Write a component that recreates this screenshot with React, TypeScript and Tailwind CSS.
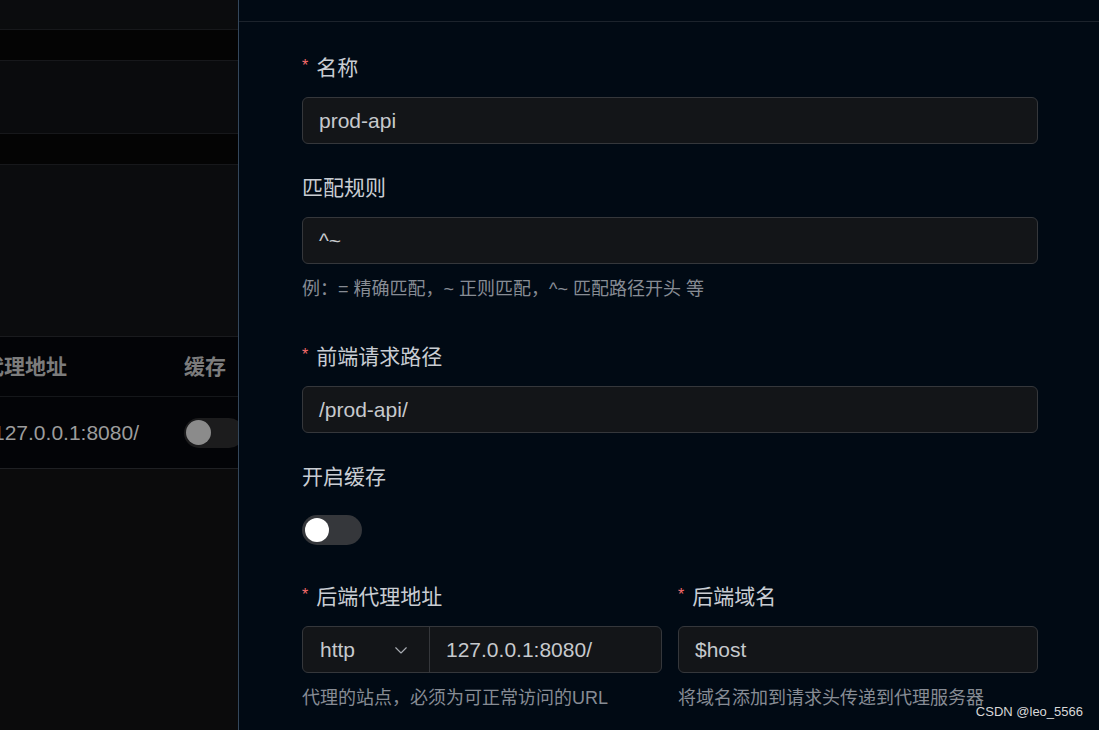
import { ReactNode } from 'react'

const Label = ({ text, required }: { text: string; required?: boolean }) => (
    <div className="flex items-center h-[30px] text-[21px] leading-[30px] text-[#c9cdd3]">
        {required && <span className="text-[#f56c6c] text-[16px] mr-[8px] mt-[-4px]">*</span>}
        <span>{text}</span>
    </div>
)

const Help = ({ children }: { children: ReactNode }) => (
    <div className="mt-[12px] text-[18px] leading-[26px] text-[#878c94] whitespace-nowrap">{children}</div>
)

const Input = ({ value }: { value: string }) => (
    <div className="flex items-center h-[47px] rounded-[6px] border border-[#35373b] bg-[#131518] px-[16px] text-[21px] text-[#c6c9cd]">
        {value}
    </div>
)

const LeftTable = () => (
    <div className="w-[239px] shrink-0 border-r border-[#34475b] flex flex-col overflow-hidden">
        <div className="h-[30px] bg-[#0b0c0e] border-b border-[#17181b]" />
        <div className="h-[31px] bg-[#040404] border-b border-[#17181b]" />
        <div className="h-[73px] bg-[#0a0b0d] border-b border-[#17181b]" />
        <div className="h-[31px] bg-[#040404] border-b border-[#17181b]" />
        <div className="h-[172px] bg-[#0b0c0e] border-b border-[#1a1b1e]" />
        <div className="h-[60px] bg-[#030407] border-b border-[#15171a] flex items-center whitespace-nowrap">
            <span className="ml-[-17px] w-[201px] shrink-0 text-[21px] font-bold text-[#7c7c7c]">代理地址</span>
            <span className="shrink-0 text-[21px] font-bold text-[#7c7c7c]">缓存</span>
        </div>
        <div className="h-[72px] bg-[#030407] border-b border-[#1f2023] flex items-center whitespace-nowrap">
            <span className="ml-[-7px] w-[191px] shrink-0 text-[21px] text-[#9c9c9c]">127.0.0.1:8080/</span>
            <div className="shrink-0 w-[60px] h-[30px] rounded-full bg-[#1c1c1d] flex items-center pl-[2px]">
                <div className="w-[25px] h-[25px] rounded-full bg-[#8b8b8b]" />
            </div>
        </div>
        <div className="flex-1 bg-[#0b0b0c]" />
    </div>
)

export default function App() {
    return (
        <div className="relative flex w-[1099px] h-[730px] overflow-hidden bg-[#010a14] font-['Liberation_Sans','Noto_Sans_CJK_SC',sans-serif]">
            <LeftTable />

            <div className="flex-1 flex flex-col bg-[#010a14]">
                <div className="h-[22px] shrink-0 border-b border-[#1c232c]" />
                <div className="pl-[63px] pr-[61px] pt-[31px]">
                    <div>
                        <Label text="名称" required />
                        <div className="mt-[14px]"><Input value="prod-api" /></div>
                    </div>

                    <div className="mt-[29px]">
                        <Label text="匹配规则" />
                        <div className="mt-[14px]"><Input value="^~" /></div>
                        <Help>例：= 精确匹配，~ 正则匹配，^~ 匹配路径开头 等</Help>
                    </div>

                    <div className="mt-[40px]">
                        <Label text="前端请求路径" required />
                        <div className="mt-[14px]"><Input value="/prod-api/" /></div>
                    </div>

                    <div className="mt-[29px]">
                        <Label text="开启缓存" />
                        <div className="mt-[14px] h-[47px] flex items-center">
                            <div className="w-[60px] h-[30px] rounded-full bg-[#35373b] flex items-center pl-[3px]">
                                <div className="w-[24px] h-[24px] rounded-full bg-white" />
                            </div>
                        </div>
                    </div>

                    <div className="mt-[29px] grid grid-cols-2 gap-x-[16px]">
                        <div>
                            <Label text="后端代理地址" required />
                            <div className="mt-[14px] flex h-[47px] rounded-[6px] border border-[#35373b] bg-[#131518] text-[21px] text-[#c6c9cd]">
                                <div className="w-[127px] shrink-0 flex items-center justify-between pl-[17px] pr-[19px] border-r border-[#35373b]">
                                    <span>http</span>
                                    <svg width="18" height="18" viewBox="0 0 24 24" fill="none" stroke="#a9adb3" strokeWidth="1.5" strokeLinecap="round" strokeLinejoin="round">
                                        <path d="M5 9l7 7 7-7" />
                                    </svg>
                                </div>
                                <div className="flex items-center pl-[16px]">127.0.0.1:8080/</div>
                            </div>
                            <Help>代理的站点，必须为可正常访问的URL</Help>
                        </div>
                        <div>
                            <Label text="后端域名" required />
                            <div className="mt-[14px]"><Input value="$host" /></div>
                            <Help>将域名添加到请求头传递到代理服务器</Help>
                        </div>
                    </div>
                </div>
            </div>

            <div className="absolute right-[16px] bottom-[9px] text-[13px] text-[#d8d8d8] font-['Liberation_Sans',sans-serif]">
                CSDN @leo_5566
            </div>
        </div>
    )
}
